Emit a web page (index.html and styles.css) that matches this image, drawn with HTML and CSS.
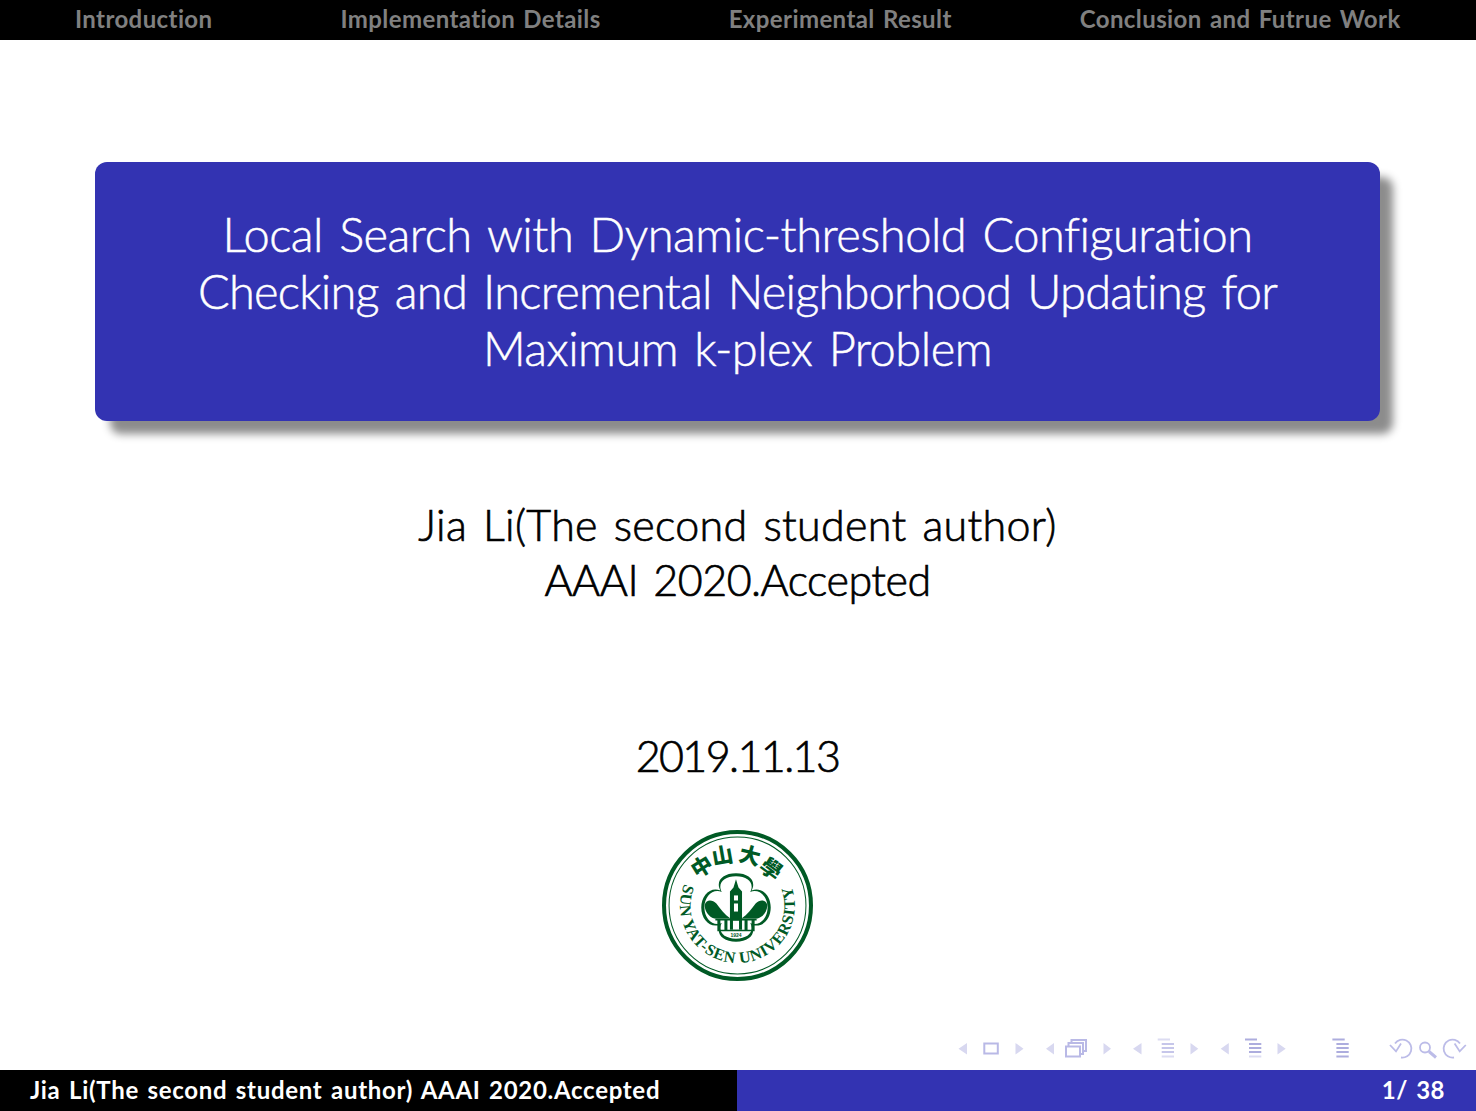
FILE: index.html
```html
<!DOCTYPE html>
<html lang="en">
<head>
<meta charset="utf-8">
<title>Local Search with Dynamic-threshold Configuration Checking</title>
<link rel="stylesheet" href="styles.css">
</head>
<body>
<div class="slide">
  <nav class="topnav">
    <span class="nav-item">Introduction</span>
    <span class="nav-item">Implementation Details</span>
    <span class="nav-item">Experimental Result</span>
    <span class="nav-item">Conclusion and Futrue Work</span>
  </nav>
  <main class="content">
    <header class="title-box">
      <h1 class="title">Local Search with Dynamic-threshold Configuration<br><span class="title-narrow">Checking and Incremental Neighborhood Updating for</span><br>Maximum k-plex Problem</h1>
    </header>
    <p class="author">Jia Li(The second student author)<br><span class="tight">AAAI 2020.Accepted</span></p>
    <p class="date">2019.11.13</p>
    <svg class="logo" viewBox="0 0 150 150" aria-label="Sun Yat-sen University logo">
      <defs>
        <path id="arc-en" d="M 22.200 53.600 A 57 57 0 1 0 127.800 53.600"/>
        <path id="foil" d="M58 60 C53 51 60 43 73.500 43 C87 43 94 51 89 60 C99 56 108 65 108 77 C108 89 99 98 89 94 C94 103 87 111 73.500 111 C60 111 53 103 58 94 C48 98 39 89 39 77 C39 65 48 56 58 60 Z"/>
      </defs>
      <circle class="logo-ring-thick" cx="75" cy="75" r="73"/>
      <circle class="logo-ring-thin" cx="75" cy="75" r="68"/>
      <text class="logo-en" textLength="220"><textPath href="#arc-en" startOffset="0" textLength="220">SUN YAT-SEN UNIVERSITY</textPath></text>
      <text class="logo-zh" y="7" transform="translate(40 37) rotate(-32)">中</text>
      <text class="logo-zh" y="7" transform="translate(60 26) rotate(-10)">山</text>
      <text class="logo-zh" y="7" transform="translate(87 26) rotate(14)">大</text>
      <text class="logo-zh" y="7" transform="translate(108 39) rotate(36)">學</text>
      <use class="logo-green" href="#foil"/>
      <use class="logo-white" href="#foil" transform="translate(73.500 77) scale(.91) translate(-73.500 -77)"/>
      <path class="logo-green" d="M42.500 74 C44 69 50 69 54 73 C58 78 62 84 68 88 L52 88 C46 86 42 80 42.500 74 Z"/>
      <path class="logo-green" d="M104.500 74 C103 69 97 69 93 73 C89 78 85 84 79 88 L95 88 C101 86 105 80 104.500 74 Z"/>
      <path class="logo-green" d="M73.500 49 L75 54 L76 57 L79.500 61 L79.500 99 L67.500 99 L67.500 61 L71 57 L72 54 Z"/>
      <rect class="logo-white" x="71.500" y="65" width="4" height="5"/>
      <rect class="logo-white" x="71.500" y="73" width="4" height="8"/>
      <rect class="logo-white" x="70.500" y="90" width="6" height="9"/>
      <path class="logo-green" d="M53 88 H94 V90 H53 Z M55 90 h3 v9 h-3 z M62 90 h3 v9 h-3 z M82 90 h3 v9 h-3 z M89 90 h3 v9 h-3 z M55 99 h37 v1.500 h-37 z"/>
      <text class="logo-year" x="73.500" y="106">1924</text>
    </svg>
  </main>
  <svg class="beamer-nav" viewBox="955 1036 515 24" aria-hidden="true">
    <path class="tri" d="M967 1043 V1054.500 L958.500 1048.800 Z M1015.500 1043 V1054.500 L1023.500 1048.800 Z M1054 1043 V1054.500 L1046 1048.800 Z M1103.500 1043 V1054.500 L1111 1048.800 Z M1141.500 1043 V1054.500 L1133 1048.800 Z M1190.500 1043 V1054.500 L1198.300 1048.800 Z M1228.800 1043 V1054.500 L1220.700 1048.800 Z M1277.500 1043 V1054.500 L1285.700 1048.800 Z"/>
    <rect class="frame" x="984.300" y="1043.500" width="13.500" height="10"/>
    <path class="frame" d="M1071.500 1043 V1040 H1086 V1051 H1083 M1068.500 1046 V1043 H1083 V1054 H1081"/>
    <rect class="frame" x="1066" y="1046.500" width="14" height="10"/>
    <path class="line-soft" d="M1157.700 1039.500 H1170 M1161.700 1056.500 H1174"/>
    <path class="line-faint" d="M1161.700 1044 H1174 M1161.700 1048 H1174 M1161.700 1052 H1174"/>
    <path class="line-mid" d="M1245 1039.500 H1257 M1249 1044 H1261.300 M1249 1048 H1261.300 M1249 1052 H1261.300"/>
    <path class="line-soft" d="M1249 1056.500 H1261.300"/>
    <path class="line-mid" d="M1332.400 1039.500 H1344.700 M1336.400 1044 H1348.700 M1336.400 1048 H1348.700 M1336.400 1052 H1348.700 M1336.400 1056.500 H1348.700"/>
    <path class="icon" d="M1395 1043.500 A9 9 0 1 1 1401 1057.500 M1390 1045 L1396 1051.400 L1401 1043.600"/>
    <circle class="icon" cx="1425" cy="1047.500" r="5"/>
    <path class="icon-thick" d="M1429 1051.500 L1436 1057.500"/>
    <path class="icon" d="M1460 1043.500 A9 9 0 1 0 1454 1057.500 M1465.800 1045 L1459.700 1051.400 L1454.600 1043.600"/>
  </svg>
  <footer class="footer">
    <div class="footer-left">Jia Li(The second student author) AAAI 2020.Accepted</div>
    <div class="footer-right">1/ 38</div>
  </footer>
</div>
</body>
</html>
```
FILE: styles.css
```css
* { box-sizing: border-box; }
html, body { margin: 0; padding: 0; background: #fff; }
body { font-family: "Lato", "Open Sans", sans-serif; font-variant-ligatures: none; }
.slide { width: 1476px; height: 1111px; display: flex; flex-direction: column; overflow: hidden; }
.topnav { flex: none; height: 40px; background: #000; display: flex; align-items: center; gap: 128px; padding: 0 0 4px 75px; color: #808080; font-size: 24px; font-weight: 700; letter-spacing: .4px; word-spacing: 2px; white-space: nowrap; }
.content { flex: 1; display: flex; flex-direction: column; align-items: center; padding: 122px 1px 0 0; min-height: 0; }
.title-box { width: 1285px; height: 259px; background: #3333b2; border-radius: 12px; box-shadow: 14px 14px 8px -1px rgba(0,0,0,.45); display: flex; align-items: center; justify-content: center; }
.title { margin: 0; color: #fff; font-size: 47px; line-height: 57px; font-weight: 300; text-align: center; letter-spacing: -.5px; word-spacing: 4px; white-space: nowrap; -webkit-text-stroke: .5px #fff; }
.title-narrow { letter-spacing: -.75px; }
.author { margin: 76px 0 0; font-size: 43px; line-height: 55px; font-weight: 300; text-align: center; color: #000; letter-spacing: .3px; word-spacing: 4px; white-space: nowrap; -webkit-text-stroke: .7px #000; }
.tight { letter-spacing: -.5px; }
.date { margin: 121px 0 0; font-size: 43px; line-height: 55px; font-weight: 300; letter-spacing: -1.600px; color: #000; -webkit-text-stroke: .7px #000; }
.logo { width: 151px; height: 151px; margin: 47px 0 0; flex: none; }
.logo-ring-thick { fill: #fff; stroke: #005a25; stroke-width: 4; }
.logo-ring-thin { fill: none; stroke: #005a25; stroke-width: 1; }
.logo-en { font-family: "Liberation Serif", serif; font-size: 16px; fill: #005a25; font-weight: 700; }
.logo-zh { font-family: "Noto Sans CJK TC", sans-serif; font-size: 21px; font-weight: 900; fill: #005a25; text-anchor: middle; }
.logo-green { fill: #005a25; }
.logo-white { fill: #fff; }
.logo-year { font-family: "Liberation Sans", sans-serif; font-size: 5px; font-weight: 700; fill: #005a25; text-anchor: middle; }
.beamer-nav { flex: none; width: 515px; height: 24px; margin: 0 6px 10px auto; display: block; }
.tri { fill: #d8d8f0; }
.frame { fill: #fff; stroke: #b9b9e6; stroke-width: 2; }
.line-soft { fill: none; stroke: #dcdcf2; stroke-width: 2; }
.line-faint { fill: none; stroke: #c6c6ea; stroke-width: 2; }
.line-mid { fill: none; stroke: #adadde; stroke-width: 2; }
.icon { fill: none; stroke: #bcbce8; stroke-width: 1.800; }
.icon-thick { fill: none; stroke: #bcbce8; stroke-width: 3; }
.footer { flex: none; height: 41px; display: flex; font-size: 24px; font-weight: 700; color: #fff; letter-spacing: .5px; word-spacing: 2px; }
.footer-left { width: 737px; background: #000; padding: 0 0 2px 30px; display: flex; align-items: center; letter-spacing: .7px; white-space: nowrap; }
.footer-right { flex: 1; background: #3333b2; display: flex; align-items: center; justify-content: flex-end; padding: 0 31px 2px 0; }
```
